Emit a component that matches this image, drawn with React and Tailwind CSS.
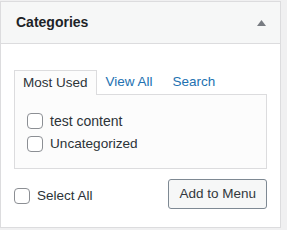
import React from 'react'

const font = { fontFamily: '"Liberation Sans", Arial, sans-serif' }

function Box() {
  return <span className="block h-4 w-4 shrink-0 rounded-[4px] border border-[#8c8f94] bg-white" />
}

function Check({ label, size = 'text-[14px]' }) {
  return (
    <label className={`flex items-center gap-[7px] leading-4 text-[#2c3338] ${size}`}>
      <Box />
      <span>{label}</span>
    </label>
  )
}

export default function App() {
  return (
    <div className="h-[230px] w-[287px] bg-[#f0f0f1] pt-px" style={font}>
      <div className="h-[227px] w-[281px] border border-[#dcdcde] bg-white">
        <div className="flex h-[42px] items-center justify-between border-b border-[#dcdcde] bg-[#f6f7f7] pl-[15px] pr-[14px]">
          <h2 className="text-[14px] font-bold text-[#1d2327]">Categories</h2>
          <svg width="9" height="6" viewBox="0 0 9 6" className="mt-px">
            <path d="M4.5 0 L9 6 L0 6 Z" fill="#787c82" />
          </svg>
        </div>
        <div className="px-[13px] pt-[26px]">
          <div className="flex h-6 items-stretch text-[13.5px]">
            <div className="relative z-10 -mb-px flex h-[25px] items-center border border-b-0 border-[#dcdcde] bg-[#fcfcfc] px-2 text-[#2c3338]">
              Most Used
            </div>
            <div className="flex items-center border border-transparent px-2 text-[#2271b1]">View All</div>
            <div className="ml-[2px] flex items-center border border-transparent px-2 text-[#2271b1]">Search</div>
          </div>
          <div className="flex h-[75px] w-[253px] flex-col gap-[7px] border border-[#dcdcde] bg-[#fcfcfc] pl-3 pt-[18px]">
            <Check label="test content" />
            <Check label="Uncategorized" size="text-[13.6px]" />
          </div>
          <div className="mt-[10px] flex items-center justify-between">
            <div className="mt-[4px]">
              <Check label="Select All" size="text-[13.5px]" />
            </div>
            <button className="h-[30px] rounded-[3px] border border-[#7e8993] bg-[#f6f7f7] px-[10px] text-[13.5px] text-[#32373c]">
              Add to Menu
            </button>
          </div>
        </div>
      </div>
    </div>
  )
}
